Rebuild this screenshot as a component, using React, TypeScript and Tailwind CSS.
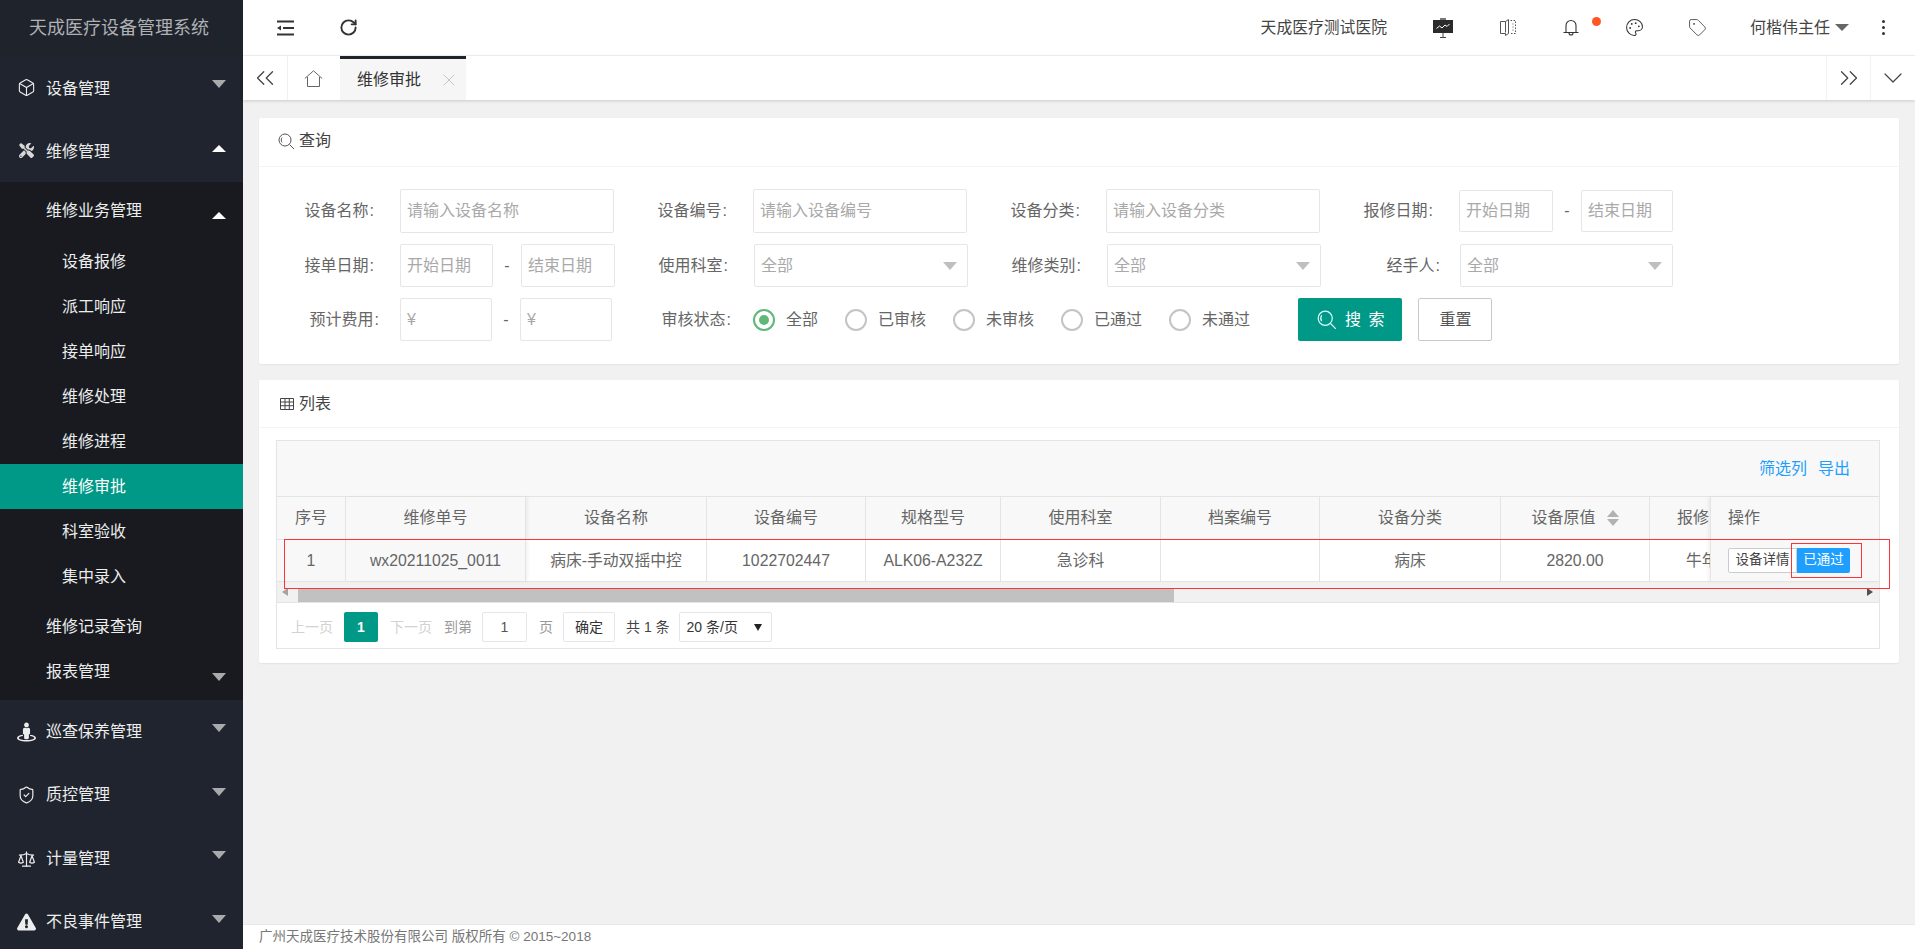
import React from "react";
import { Box, ShieldCheck, Scale, Palette, Tag, RotateCw, ChevronsLeft, ChevronsRight, ChevronDown, X } from "lucide-react";
import { FaTools, FaStreetView, FaExclamationTriangle } from "react-icons/fa";

const Down = ({ c = "border-t-[#a9aaac]" }: { c?: string }) => (
  <span className={`block w-0 h-0 border-x-[7px] border-x-transparent border-t-[8px] ${c}`} />
);
const Up = () => <span className="block w-0 h-0 border-x-[7px] border-x-transparent border-b-[7px] border-b-white" />;

function Top({ icon, text, up, h = "h-[63px]", tm = "mt-[2px]" }: { icon: React.ReactNode; text: string; up?: boolean; h?: string; tm?: string }) {
  return (
    <div className={`flex items-center ${h} shrink-0 pl-[17px] pr-[17px] text-[16px] text-[#eceded]`}>
      <span className="w-[19px] flex justify-center mr-[10px]">{icon}</span>
      <span className={tm}>{text}</span>
      <span className={`ml-auto ${up ? "mb-[5px]" : "mb-[7px]"}`}>{up ? <Up /> : <Down />}</span>
    </div>
  );
}

function Sidebar() {
  const subs = ["设备报修", "派工响应", "接单响应", "维修处理", "维修进程", "维修审批", "科室验收", "集中录入"];
  return (
    <aside className="w-[243px] shrink-0 bg-[#20242e] flex flex-col overflow-hidden">
      <div className="h-[56px] shrink-0 flex items-center justify-center pr-[5px] text-[18px] text-[#b0b1b4] bg-[#1f232c]">天成医疗设备管理系统</div>
      <Top icon={<Box size={23} strokeWidth={1.4} />} text="设备管理" />
      <Top icon={<FaTools size={15} color="#d8d8d8" />} text="维修管理" up />
      <div className="bg-[#181a20] text-[16px] text-[#eceded]">
        <div className="h-[57px] flex items-center pl-[46px] pr-[17px]">
          <span className="mt-[1px]">维修业务管理</span>
          <span className="ml-auto mt-[10px]"><Up /></span>
        </div>
        {subs.map((s) => (
          <div key={s} className={`h-[45px] flex items-center pl-[62px] ${s === "维修审批" ? "bg-[#009988] text-white" : ""}`}>
            <span className="mt-[1px]">{s}</span>
          </div>
        ))}
        <div className="h-[51px] flex items-center pl-[46px]"><span className="mt-[4px]">维修记录查询</span></div>
        <div className="h-[50px] flex items-start pt-[10px] pl-[46px] pr-[17px]">
          <span>报表管理</span>
          <span className="ml-auto mt-[13px]"><Down /></span>
        </div>
      </div>
      <Top h="h-[63.5px]" tm="mt-0" icon={<FaStreetView size={20} />} text="巡查保养管理" />
      <Top h="h-[63.5px]" tm="mt-0" icon={<ShieldCheck size={24} strokeWidth={1.5} />} text="质控管理" />
      <Top h="h-[63.5px]" tm="mt-0" icon={<Scale size={24} strokeWidth={1.5} />} text="计量管理" />
      <Top h="h-[63.5px]" tm="mt-0" icon={<FaExclamationTriangle size={20} />} text="不良事件管理" />
    </aside>
  );
}

function Header() {
  return (
    <header className="h-[56px] shrink-0 bg-white border-b border-[#f2f2f2] flex items-center pl-[34px] pr-[30px] text-[16px] text-[#444]">
      <svg width="18" height="16" viewBox="0 0 18 16" fill="none" stroke="#333" strokeWidth="2">
        <path d="M0 1.5h17M6 8h11M0 14.5h17" />
        <path d="M0 8l4-2.6v5.2z" fill="#333" stroke="none" />
      </svg>
      <RotateCw size={19} strokeWidth={2.4} color="#333" className="ml-[44px]" />
      <span className="ml-auto text-[15.8px]">天成医疗测试医院</span>
      <svg className="ml-[46px]" width="20" height="20" viewBox="0 0 20 20" fill="none">
        <rect x="7" y="0" width="6" height="2" fill="#777" />
        <rect x="0" y="2" width="20" height="13" fill="#2b2b2b" />
        <path d="M3.5 10.5l3-2.5 2.5 2 3-3 2 1.5 2.5-2.5" stroke="#fff" strokeWidth="1" />
        <path d="M10 15v4M7 19.5h6" stroke="#444" strokeWidth="1" />
      </svg>
      <svg className="ml-[47px]" width="16" height="17" viewBox="0 0 16 17" fill="none" stroke="#555" strokeWidth="1">
        <path d="M.5 2.5h5l3-2v14l-3 2v-2h-5zM5.5 2.5v11" />
        <path d="M10.5 1.5h5v13h-5M12.5 5h1M12.5 8h1M12.5 11h1" strokeDasharray="1.5 1.5" />
      </svg>
      <span className="relative ml-[47px] block">
        <svg width="16" height="17" viewBox="0 0 16 17" fill="none" stroke="#333" strokeWidth="1.1" className="block">
          <path d="M3 13V6.5a5 5 0 0 1 10 0V13M.5 13.5h15M6 14a2 2 0 0 0 4 0" />
        </svg>
        <span className="absolute left-[29px] -top-[2px] w-[9px] h-[9px] rounded-full bg-[#ff5722]" />
      </span>
      <Palette size={19} strokeWidth={1.3} color="#333" className="ml-[46px]" />
      <Tag size={19} strokeWidth={1.1} color="#444" className="ml-[44px]" />
      <span className="ml-[43px]">何楷伟主任</span>
      <span className="ml-[5px]"><span className="block w-0 h-0 border-x-[7px] border-x-transparent border-t-[7px] border-t-[#666]" /></span>
      <span className="ml-[33px] flex flex-col gap-[3px]">
        <i className="block w-[3px] h-[3px] bg-[#333] rounded-full" />
        <i className="block w-[3px] h-[3px] bg-[#333] rounded-full" />
        <i className="block w-[3px] h-[3px] bg-[#333] rounded-full" />
      </span>
    </header>
  );
}

function Tabs() {
  return (
    <div className="relative z-10 h-[44px] shrink-0 bg-white flex shadow-[0_1px_3px_rgba(0,0,0,0.16)] text-[16px]">
      <div className="w-[45px] border-r border-[#f0f0f0] flex items-center justify-center">
        <ChevronsLeft size={30} strokeWidth={1} color="#444" />
      </div>
      <div className="w-[52px] flex items-center justify-center pr-[2px]">
        <svg width="19" height="17" viewBox="0 0 19 17" fill="none" stroke="#666" strokeWidth="1">
          <path d="M.8 8.5L9.5.8l8.7 7.7M3.5 7v9.5h12V7" />
        </svg>
      </div>
      <div className="w-[126px] bg-[#f6f6f6] border-t-[3px] border-[#1f232c] flex items-center pl-[17px] text-[#333]">
        <span>维修审批</span>
        <X size={20} strokeWidth={0.9} color="#b5b5b5" className="ml-[18px]" />
      </div>
      <div className="ml-auto w-[44px] border-l border-[#f2f2f2] flex items-center justify-center">
        <ChevronsRight size={30} strokeWidth={1} color="#444" />
      </div>
      <div className="w-[45px] border-l border-[#f2f2f2] flex items-center justify-center">
        <ChevronDown size={32} strokeWidth={0.9} color="#444" />
      </div>
    </div>
  );
}

function SearchIcon({ c = "#555", s = 17 }: { c?: string; s?: number }) {
  return (
    <svg width={s} height={s} viewBox="0 0 17 17" fill="none" stroke={c} strokeWidth="1">
      <circle cx="7" cy="7" r="6" />
      <path d="M4 4.5c-1 1.5-1 3.5 0 5M11.5 11.5l4.5 4.5" />
    </svg>
  );
}

function Label({ t, w = "w-[113px]", m = "mr-[26px]" }: { t: string; w?: string; m?: string }) {
  return (
    <span className={`${w} ${m} shrink-0 text-right text-[#666]`}>
      {t}
      <span className="ml-[1px]">:</span>
    </span>
  );
}
const field = "h-full border border-[#e6e6e6] rounded-[2px] bg-white text-[16px] px-[6px] outline-none placeholder:text-[#a9a9a9]";
function Inp({ w, ph }: { w: string; ph: string }) {
  return <input className={`${w} ${field} shrink-0`} placeholder={ph} />;
}
function Sel({ w }: { w: string }) {
  return (
    <div className={`${w} h-full shrink-0 border border-[#e6e6e6] rounded-[2px] bg-white pl-[6px] pr-[10px] flex items-center text-[#a9a9a9]`}>
      <span>全部</span>
      <span className="ml-auto"><Down c="border-t-[#bfbfbf]" /></span>
    </div>
  );
}
const Dash = () => <span className="w-[28px] shrink-0 text-center text-[#666]">-</span>;
function Radio({ t, w, on }: { t: string; w: string; on?: boolean }) {
  return (
    <span className={`${w} shrink-0 flex items-center text-[#666]`}>
      <span className={`w-[22px] h-[22px] rounded-full border-2 flex items-center justify-center mr-[11px] ${on ? "border-[#5fb878]" : "border-[#c4c4c4]"}`}>
        {on && <span className="w-[10px] h-[10px] rounded-full bg-[#5fb878]" />}
      </span>
      {t}
    </span>
  );
}

function PanelHead({ icon, t, h = "h-[48px]" }: { icon: React.ReactNode; t: string; h?: string }) {
  return (
    <div className={`${h} border-b border-[#f4f4f4] flex items-center pl-[19px] text-[#444]`}>
      <span className="w-[17px] flex justify-center mr-[4px]">{icon}</span>
      {t}
    </div>
  );
}

function Query() {
  return (
    <section className="bg-white rounded-[2px] shadow-[0_1px_2px_rgba(0,0,0,0.06)] h-[246px]">
      <PanelHead h="h-[49px] pb-[2px]" icon={<SearchIcon />} t="查询" />
      <div className="pt-[22px] flex flex-col">
        <div className="flex items-center h-[44px]">
          <Label t="设备名称" w="w-[115px]" />
          <Inp w="w-[214px]" ph="请输入设备名称" />
          <Label t="设备编号" />
          <Inp w="w-[214px]" ph="请输入设备编号" />
          <Label t="设备分类" />
          <Inp w="w-[214px]" ph="请输入设备分类" />
          <Label t="报修日期" />
          <div className="h-[42px] flex items-center">
            <Inp w="w-[94px]" ph="开始日期" />
            <Dash />
            <Inp w="w-[92px]" ph="结束日期" />
          </div>
        </div>
        <div className="flex items-center h-[43px] mt-[11px]">
          <Label t="接单日期" w="w-[115px]" />
          <Inp w="w-[93px]" ph="开始日期" />
          <Dash />
          <Inp w="w-[94px]" ph="结束日期" />
          <Label t="使用科室" />
          <Sel w="w-[214px]" />
          <Label t="维修类别" />
          <Sel w="w-[214px]" />
          <Label t="经手人" w="w-[119px]" m="mr-[20px]" />
          <Sel w="w-[213px]" />
        </div>
        <div className="flex items-center h-[43px] mt-[11px]">
          <Label t="预计费用" w="w-[120px]" m="mr-[21px]" />
          <Inp w="w-[92px]" ph="¥" />
          <Dash />
          <Inp w="w-[92px]" ph="¥" />
          <Label t="审核状态" w="w-[119px]" m="mr-[22px]" />
          <Radio t="全部" w="w-[92px]" on />
          <Radio t="已审核" w="w-[108px]" />
          <Radio t="未审核" w="w-[108px]" />
          <Radio t="已通过" w="w-[108px]" />
          <Radio t="未通过" w="w-[129px]" />
          <button className="w-[104px] h-full bg-[#009988] rounded-[2px] text-white flex items-center justify-center pl-[3px] gap-[8px] tracking-[1.5px]">
            <SearchIcon c="#dff" s={20} />
            <span>搜 索</span>
          </button>
          <button className="w-[74px] h-full ml-[16px] pl-[1px] border border-[#c9c9c9] rounded-[2px] text-[#555]">重置</button>
        </div>
      </div>
    </section>
  );
}

type Col = { w: string; h: string; v: string; fix?: boolean; shade?: boolean; sort?: boolean; last?: boolean };
const cols: Col[] = [
  { w: "w-[69px]", h: "序号", v: "1", fix: true },
  { w: "w-[180px]", h: "维修单号", v: "wx20211025_0011", fix: true, shade: true },
  { w: "w-[181px]", h: "设备名称", v: "病床-手动双摇中控" },
  { w: "w-[159px]", h: "设备编号", v: "1022702447" },
  { w: "w-[135px]", h: "规格型号", v: "ALK06-A232Z" },
  { w: "w-[160px]", h: "使用科室", v: "急诊科" },
  { w: "w-[159px]", h: "档案编号", v: "" },
  { w: "w-[181px]", h: "设备分类", v: "病床" },
  { w: "w-[149px]", h: "设备原值", v: "2820.00", sort: true },
  { w: "w-[120px]", h: "报修", v: "牛年", last: true },
];

function Pager() {
  const box = "h-[30px] border border-[#e6e6e6] rounded-[2px] bg-white flex items-center justify-center";
  return (
    <div className="h-[45px] pt-[9px] pl-[14px] flex items-start text-[14px]">
      <span className="h-[30px] leading-[30px] text-[#d2d2d2]">上一页</span>
      <span className="ml-[11px] w-[34px] h-[30px] bg-[#009988] rounded-[2px] text-white flex items-center justify-center font-bold">1</span>
      <span className="ml-[12px] h-[30px] leading-[30px] text-[#d2d2d2]">下一页</span>
      <span className="ml-[12px] h-[30px] leading-[30px] text-[#999]">到第</span>
      <span className={`ml-[10px] w-[45px] ${box} text-[#555]`}>1</span>
      <span className="ml-[12px] h-[30px] leading-[30px] text-[#999]">页</span>
      <span className={`ml-[10px] w-[52px] ${box} text-[#333]`}>确定</span>
      <span className="ml-[11px] h-[30px] leading-[30px] text-[#444]">共 1 条</span>
      <span className={`ml-[9px] w-[93px] ${box} text-[#333] !justify-start pl-[7px]`}>
        20 条/页
        <span className="ml-auto mr-[9px] block w-0 h-0 border-x-[4px] border-x-transparent border-t-[7px] border-t-[#222]" />
      </span>
    </div>
  );
}

function Table() {
  return (
    <div className="relative border border-[#e4e4e4] bg-white">
      <div className="relative overflow-hidden">
        <div className="h-[56px] bg-[#f8f8f8] border-b border-[#e4e4e4] flex items-center justify-end pr-[29px] gap-[11px] text-[#1e9fff]">
          <span>筛选列</span>
          <span>导出</span>
        </div>
        <div className="flex w-[1700px] h-[43px] bg-[#f8f8f8] border-b border-[#e4e4e4] text-[#666]">
          {cols.map((c) => (
            <div key={c.h} className={`${c.w} shrink-0 border-r border-[#e4e4e4] flex items-center ${c.last ? "justify-start pl-[27px]" : "justify-center"} ${c.shade ? "shadow-[2px_0_3px_rgba(0,0,0,0.05)]" : ""}`}>
              {c.h}
              {c.sort && (
                <span className="ml-[11px] flex flex-col gap-[2px]">
                  <span className="block w-0 h-0 border-x-[6px] border-x-transparent border-b-[7px] border-b-[#b2b2b2]" />
                  <span className="block w-0 h-0 border-x-[6px] border-x-transparent border-t-[7px] border-t-[#b2b2b2]" />
                </span>
              )}
            </div>
          ))}
        </div>
        <div className="flex w-[1700px] h-[42px] bg-white border-b border-[#e4e4e4] text-[#666]">
          {cols.map((c) => (
            <div key={c.h} className={`${c.w} shrink-0 border-r border-[#e4e4e4] flex items-center ${c.last ? "justify-start pl-[36px]" : "justify-center"} text-[15.8px] ${c.fix ? "bg-[#f8f8f8]" : ""} ${c.shade ? "shadow-[2px_0_3px_rgba(0,0,0,0.05)]" : ""}`}>
              {c.v}
            </div>
          ))}
        </div>
        <div className="flex items-center h-[21px] bg-[#f1f1f1] border-b border-[#e4e4e4] pl-[5px] pr-[6px]">
          <span className="block w-0 h-0 border-y-[4px] border-y-transparent border-r-[6px] border-r-[#a3a3a3]" />
          <span className="block ml-[10px] mt-[6px] w-[876px] h-[13px] bg-[#c1c1c1]" />
          <span className="block ml-auto w-0 h-0 border-y-[4px] border-y-transparent border-l-[6px] border-l-[#505050]" />
        </div>
        <div className="absolute right-0 top-[56px] w-[169px] h-[85px] bg-[#f8f8f8] border-l border-[#e4e4e4] shadow-[-2px_0_3px_rgba(0,0,0,0.05)] text-[#666]">
          <div className="h-[43px] border-b border-[#e4e4e4] flex items-center pl-[17px]">操作</div>
          <div className="h-[42px] border-b border-[#e4e4e4] flex items-center pl-[17px] text-[13.5px]">
            <span className="w-[69px] h-[25px] bg-white border border-[#ccc] rounded-l-[2px] flex items-center justify-center text-[#444]">设备详情</span>
            <span className="w-[53px] h-[25px] bg-[#1e9fff] rounded-r-[2px] flex items-center justify-center text-white">已通过</span>
          </div>
        </div>
      </div>
      <Pager />
      <div className="absolute left-[7px] top-[98px] w-[1606px] h-[50px] border border-[#f33] pointer-events-none" />
      <div className="absolute left-[1514px] top-[102px] w-[71px] h-[35px] border border-[#f33] pointer-events-none" />
    </div>
  );
}

function List() {
  return (
    <section className="mt-[16px] bg-white rounded-[2px] shadow-[0_1px_2px_rgba(0,0,0,0.06)] h-[283px]">
      <PanelHead
        icon={
          <svg width="14" height="12" viewBox="0 0 14 12" fill="none" stroke="#444" strokeWidth="1">
            <path d="M.5.5h13v11H.5zM.5 4h13M.5 7.7h13M5 .5v11M9.3.5v11" />
          </svg>
        }
        t="列表"
      />
      <div className="pt-[12px] pl-[17px] pr-[19px]">
        <Table />
      </div>
    </section>
  );
}

export default function App() {
  return (
    <div className="flex h-[949px] w-[1915px] overflow-hidden bg-[#f1f1f1] text-[16px] font-['Liberation_Sans','Noto_Sans_CJK_SC',sans-serif]">
      <Sidebar />
      <div className="flex-1 min-w-0 flex flex-col">
        <Header />
        <Tabs />
        <main className="flex-1 px-[16px] pt-[18px]">
          <Query />
          <List />
        </main>
        <footer className="h-[25px] shrink-0 bg-white border-t border-[#e8e8e8] pl-[16px] flex items-center text-[13.5px] text-[#777]">
          广州天成医疗技术股份有限公司 版权所有 © 2015~2018
        </footer>
      </div>
    </div>
  );
}
